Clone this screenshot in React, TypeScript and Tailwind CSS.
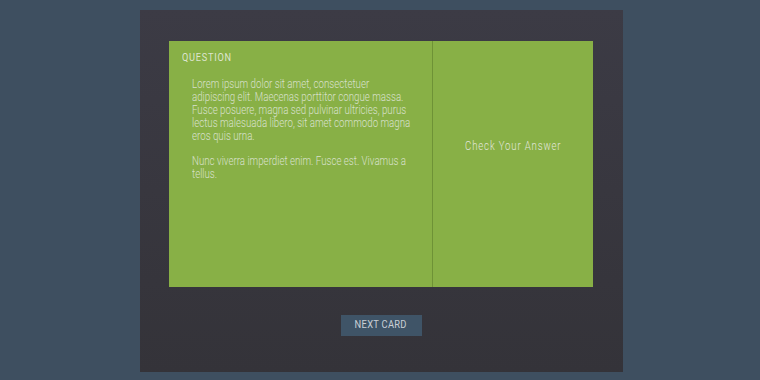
import React from "react";

export default function App() {
  const f = { fontFamily: '"Roboto", "Liberation Sans", sans-serif' };
  return (
    <div className="w-[760px] h-[380px] bg-[#3e4f60] pt-[10px] pl-[140px]" style={f}>
      <div className="w-[483px] h-[362px] bg-gradient-to-b from-[#3c3b45] to-[#343339] flex flex-col items-start pt-[31px] pl-[29px]">
        <div className="w-[424px] h-[246px] bg-[#88b046] flex">
          <div className="w-[264px] border-r border-[#6e9236] pt-[9px] pl-[13px]">
            <div className="origin-left scale-x-[0.8] w-[80px] text-[11.5px] tracking-[0.08em] text-[#dde5cf] leading-[14px] whitespace-nowrap">QUESTION</div>
            <div className="pl-[10px] pt-[14px]">
              <div className="origin-left scale-x-[0.81] w-[280px] text-[12px] font-light leading-[13px] text-[#d8e0cc] whitespace-nowrap">
                <p>Lorem ipsum dolor sit amet, consectetuer<br />adipiscing elit. Maecenas porttitor congue massa.<br />Fusce posuere, magna sed pulvinar ultricies, purus<br />lectus malesuada libero, sit amet commodo magna<br />eros quis urna.</p>
                <p className="mt-[12px]">Nunc viverra imperdiet enim. Fusce est. Vivamus a<br />tellus.</p>
              </div>
            </div>
          </div>
          <div className="flex-1 flex justify-center pt-[98px]">
            <span className="scale-x-[0.8] text-[12px] font-light tracking-[0.09em] text-[#e2e6dc] leading-[14px] whitespace-nowrap">Check Your Answer</span>
          </div>
        </div>
        <div className="w-[424px] flex justify-center mt-[28px]">
          <button className="w-[81px] h-[21px] bg-[#3f5467] text-[#c9cfd6] flex items-center justify-center">
            <span className="scale-x-[0.85] text-[11px] tracking-[0.03em] whitespace-nowrap">NEXT CARD</span>
          </button>
        </div>
      </div>
    </div>
  );
}
